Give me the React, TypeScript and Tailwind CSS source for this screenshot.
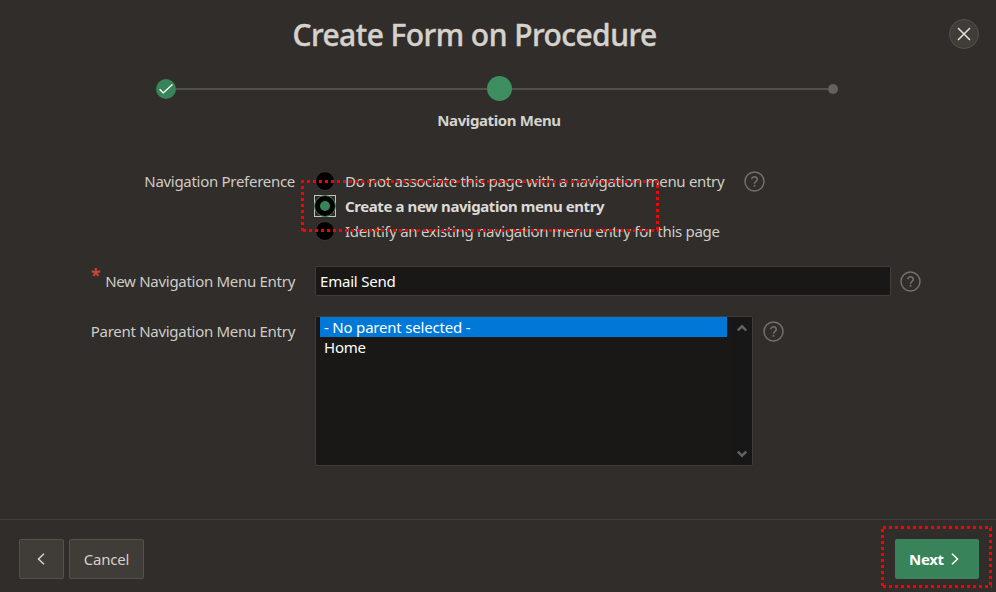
import type { ReactNode } from "react";

function HelpIcon() {
  return (
    <svg className="size-[21px] shrink-0" viewBox="0 0 21 21" fill="none" stroke="#75706b">
      <circle cx="10.5" cy="10.5" r="9.5" strokeWidth="1.5" />
      <path d="M7.8 8.300a2.700 2.500 0 1 1 4.300 2c-1 .7-1.600 1.100-1.600 2.400" strokeWidth="1.600" />
      <path d="M10.500 13.900v1.700" strokeWidth="1.800" />
    </svg>
  );
}

function Label({ children, required }: { children: ReactNode; required?: boolean }) {
  return (
    <div className="flex w-[295px] shrink-0 justify-end pt-[5px] tracking-[-0.29px] text-[#cfccc8]">
      {required && <span className="-mt-[6px] mr-[5px] text-[18px] leading-5 font-bold text-[#c74634]">*</span>}
      {children}
    </div>
  );
}

function Radio({ checked }: { checked?: boolean }) {
  if (checked) {
    return (
      <span className="flex size-[22px] items-center justify-center border border-[#c4c1bd]">
        <span className="flex size-[22px] shrink-0 items-center justify-center rounded-full border border-[#38835a] bg-black">
          <span className="size-[10px] rounded-full bg-[#38835a]" />
        </span>
      </span>
    );
  }
  return (
    <span className="flex size-[22px] items-center justify-center">
      <span className="size-5 rounded-full border border-[#3c3a36] bg-black" />
    </span>
  );
}

type FrameProps = { w: number; h: number; top: number; right: number; bottom: number; left: number };

/* Dotted rectangle; each side starts its first dot at its own offset. */
function DottedFrame({ w, h, top, right, bottom, left }: FrameProps) {
  return (
    <svg width={w} height={h} fill="none" stroke="#ff0000" strokeWidth="3" strokeDasharray="3 3">
      <path d={`M${top} 1.5H${w}`} />
      <path d={`M${w - 1.5} ${right}V${h}`} />
      <path d={`M${bottom} ${h - 1.5}H${w}`} />
      <path d={`M1.5 ${left}V${h}`} />
    </svg>
  );
}

export default function App() {
  return (
    <div className="relative flex h-[592px] w-[996px] flex-col overflow-hidden bg-[#312d2a] font-['Noto_Sans',sans-serif] text-[15px] leading-5 whitespace-nowrap">
      <header className="flex h-[70px] items-start pt-[19px] pr-[17px]">
        <h1 className="flex-1 text-center text-[30px] leading-[32px] font-medium tracking-[-0.55px] text-[#d5d2ce] [-webkit-text-stroke:0.4px_#d5d2ce]">
          Create Form on Procedure
        </h1>
        <button className="flex size-[30px] items-center justify-center rounded-full border border-[#54514b] bg-[#403c38]">
          <svg className="size-[14px]" viewBox="0 0 14 14" stroke="#e5e2de" strokeWidth="1.500">
            <path d="M1 1l12 12M13 1L1 13" />
          </svg>
        </button>
      </header>

      <div className="flex h-[38px] items-center pl-[156px]">
        <span className="flex size-5 items-center justify-center rounded-full bg-[#38835a]">
          <svg className="size-[14px]" viewBox="0 0 14 14" fill="none" stroke="#fff" strokeWidth="1.400">
            <path d="M.6 7.200l3.700 3.700L13.400 2.400" />
          </svg>
        </span>
        <span className="h-[2px] w-[311px] bg-[#54514b]" />
        <span className="-mt-px size-[25px] rounded-full bg-[#3d8f62]" />
        <span className="h-[2px] w-[316px] bg-[#54514b]" />
        <span className="size-[10px] rounded-full bg-[#67615e]" />
      </div>
      <div className="pt-[2px] pl-[2px] text-center font-bold tracking-[-0.4px] text-[#d5d2ce]">Navigation Menu</div>

      <main className="flex flex-1 flex-col pt-[36px]">
        <div className="flex h-[100px]">
          <Label>Navigation Preference</Label>
          <div className="ml-[19px] pt-[2px] tracking-[-0.31px] text-[#d0cdc9]">
            <div className="flex h-[25px] items-center gap-[9px]"><Radio />Do not associate this page with a navigation menu entry</div>
            <div className="flex h-[25px] items-center gap-[9px] font-bold tracking-[-0.41px] text-[#dcdad7]"><Radio checked />Create a new navigation menu entry</div>
            <div className="flex h-[25px] items-center gap-[9px]"><Radio />Identify an existing navigation menu entry for this page</div>
          </div>
          <div className="ml-[20px] pt-[5px]"><HelpIcon /></div>
        </div>
        <div className="flex h-[50px]">
          <Label required>New Navigation Menu Entry</Label>
          <div className="ml-[20px] flex h-[30px] w-[576px] items-center rounded-[2px] border border-[#403c38] bg-[#191816] pl-[4px] tracking-[-0.2px] text-white">Email Send</div>
          <div className="ml-[9px] pt-[5px]"><HelpIcon /></div>
        </div>
        <div className="flex">
          <Label>Parent Navigation Menu Entry</Label>
          <div className="ml-[20px] flex h-[150px] w-[438px] rounded-[2px] border border-[#403c38] bg-[#191816] tracking-[-0.2px] text-white">
            <div className="w-[415px] pl-[4px]">
              <div className="h-5 w-[407px] bg-[#0078d7] pl-[4px]">- No parent selected -</div>
              <div className="h-5 pl-[4px]">Home</div>
            </div>
            <div className="flex flex-1 flex-col items-center justify-between bg-[#171717] py-[7px]">
              <svg width="10" height="8" fill="none" stroke="#65635f" strokeWidth="2.400"><path d="M.8 6.500L5 2.300l4.200 4.200" /></svg>
              <svg width="10" height="8" fill="none" stroke="#65635f" strokeWidth="2.400"><path d="M.8 1.500L5 5.700l4.200-4.200" /></svg>
            </div>
          </div>
          <div className="ml-[10px] pt-[5px]"><HelpIcon /></div>
        </div>
      </main>

      <footer className="flex h-[73px] items-start border-t border-[#403c38] pt-[19px] pr-[17px] pl-[19px] text-[#d5d2ce]">
        <button className="flex h-10 w-[45px] items-center justify-center rounded-[2px] border border-[#54514b] bg-[#403c38] pr-[2px]">
          <svg width="8" height="12" fill="none" stroke="currentColor" strokeWidth="1.500"><path d="M7 .7L1.500 6 7 11.300" /></svg>
        </button>
        <button className="ml-[5px] h-10 w-[75px] rounded-[2px] border border-[#54514b] bg-[#403c38] tracking-[-0.2px]">Cancel</button>
        <button className="ml-auto flex h-10 w-[84px] items-center gap-[7px] rounded-[2px] bg-[#38835a] pl-[14px] font-bold tracking-[-0.3px] text-white">
          Next
          <svg width="8" height="12" fill="none" stroke="currentColor" strokeWidth="1.500"><path d="M1 .7L6.500 6 1 11.300" /></svg>
        </button>
      </footer>

      <div className="absolute top-[180px] left-[301px]"><DottedFrame w={358} h={52} top={0} right={5} bottom={2} left={0} /></div>
      <div className="absolute top-[526px] left-[881px]"><DottedFrame w={111} h={62} top={2} right={2} bottom={2} left={3} /></div>
    </div>
  );
}
